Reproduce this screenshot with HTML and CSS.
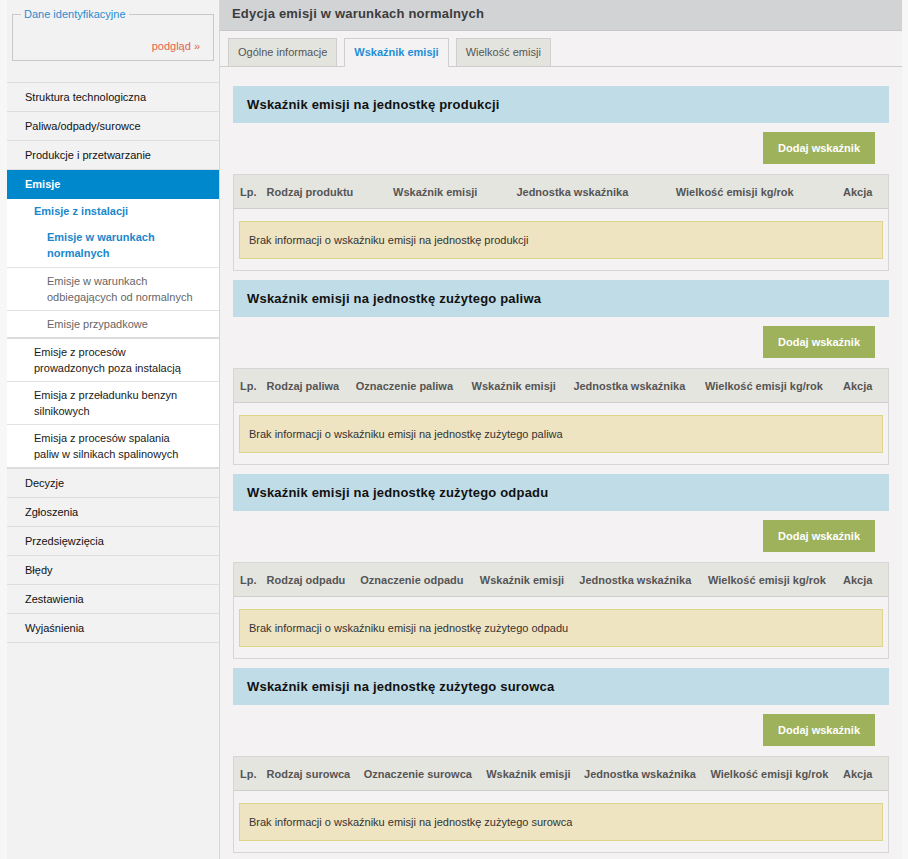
FILE: index.html
```html
<!DOCTYPE html>
<html lang="pl">
<head>
<meta charset="utf-8">
<title>Edycja emisji w warunkach normalnych</title>
<link rel="stylesheet" href="styles.css">
</head>
<body>
<div class="page">
  <aside class="sidebar">
    <div class="ident">
      <fieldset class="ident-box">
        <legend>Dane identyfikacyjne</legend>
        <div class="preview"><a href="#">podgląd »</a></div>
      </fieldset>
    </div>
    <ul class="menu">
      <li class="menu-item">Struktura technologiczna</li>
      <li class="menu-item">Paliwa/odpady/surowce</li>
      <li class="menu-item">Produkcje i przetwarzanie</li>
      <li class="menu-item active">Emisje</li>
      <li class="submenu">
        <div class="sub-head">Emisje z instalacji</div>
        <div class="subsub current">Emisje w warunkach<br>normalnych</div>
        <div class="subsub">Emisje w warunkach<br>odbiegających od normalnych</div>
        <div class="subsub last">Emisje przypadkowe</div>
        <div class="sub-item">Emisje z procesów<br>prowadzonych poza instalacją</div>
        <div class="sub-item">Emisja z przeładunku benzyn<br>silnikowych</div>
        <div class="sub-item last">Emisja z procesów spalania<br>paliw w silnikach spalinowych</div>
      </li>
      <li class="menu-item">Decyzje</li>
      <li class="menu-item">Zgłoszenia</li>
      <li class="menu-item">Przedsięwzięcia</li>
      <li class="menu-item">Błędy</li>
      <li class="menu-item">Zestawienia</li>
      <li class="menu-item">Wyjaśnienia</li>
    </ul>
  </aside>

  <main class="main">
    <div class="title-bar">Edycja emisji w warunkach normalnych</div>
    <div class="tabs">
      <div class="tab">Ogólne informacje</div>
      <div class="tab active">Wskaźnik emisji</div>
      <div class="tab">Wielkość emisji</div>
    </div>

    <div class="content">
      <section class="block">
        <h2 class="block-title">Wskaźnik emisji na jednostkę produkcji</h2>
        <div class="btn-row"><button class="btn">Dodaj wskaźnik</button></div>
        <table class="grid">
          <thead>
            <tr>
              <th class="lp">Lp.</th><th>Rodzaj produktu</th><th>Wskaźnik emisji</th><th>Jednostka wskaźnika</th><th>Wielkość emisji kg/rok</th><th class="akcja">Akcja</th>
            </tr>
          </thead>
          <tbody>
            <tr><td colspan="6"><div class="notice">Brak informacji o wskaźniku emisji na jednostkę produkcji</div></td></tr>
          </tbody>
        </table>
      </section>

      <section class="block">
        <h2 class="block-title">Wskaźnik emisji na jednostkę zużytego paliwa</h2>
        <div class="btn-row"><button class="btn">Dodaj wskaźnik</button></div>
        <table class="grid">
          <thead>
            <tr>
              <th class="lp">Lp.</th><th>Rodzaj paliwa</th><th>Oznaczenie paliwa</th><th>Wskaźnik emisji</th><th>Jednostka wskaźnika</th><th>Wielkość emisji kg/rok</th><th class="akcja">Akcja</th>
            </tr>
          </thead>
          <tbody>
            <tr><td colspan="7"><div class="notice">Brak informacji o wskaźniku emisji na jednostkę zużytego paliwa</div></td></tr>
          </tbody>
        </table>
      </section>

      <section class="block">
        <h2 class="block-title">Wskaźnik emisji na jednostkę zużytego odpadu</h2>
        <div class="btn-row"><button class="btn">Dodaj wskaźnik</button></div>
        <table class="grid">
          <thead>
            <tr>
              <th class="lp">Lp.</th><th>Rodzaj odpadu</th><th>Oznaczenie odpadu</th><th>Wskaźnik emisji</th><th>Jednostka wskaźnika</th><th>Wielkość emisji kg/rok</th><th class="akcja">Akcja</th>
            </tr>
          </thead>
          <tbody>
            <tr><td colspan="7"><div class="notice">Brak informacji o wskaźniku emisji na jednostkę zużytego odpadu</div></td></tr>
          </tbody>
        </table>
      </section>

      <section class="block">
        <h2 class="block-title">Wskaźnik emisji na jednostkę zużytego surowca</h2>
        <div class="btn-row"><button class="btn">Dodaj wskaźnik</button></div>
        <table class="grid">
          <thead>
            <tr>
              <th class="lp">Lp.</th><th>Rodzaj surowca</th><th>Oznaczenie surowca</th><th>Wskaźnik emisji</th><th>Jednostka wskaźnika</th><th>Wielkość emisji kg/rok</th><th class="akcja">Akcja</th>
            </tr>
          </thead>
          <tbody>
            <tr><td colspan="7"><div class="notice">Brak informacji o wskaźniku emisji na jednostkę zużytego surowca</div></td></tr>
          </tbody>
        </table>
      </section>
    </div>
  </main>
</div>
</body>
</html>
```

FILE: styles.css
```css
* { box-sizing: border-box; }

html, body {
  margin: 0;
  padding: 0;
}

body {
  background: #f7f7f7;
  font-family: "Liberation Sans", Arial, sans-serif;
  font-size: 11px;
  color: #111;
}

.page {
  display: flex;
  width: 895px;
  margin-left: 7px;
  min-height: 100vh;
}

/* ---------- sidebar ---------- */
.sidebar {
  width: 213px;
  flex: none;
  background: #f2f2f2;
  border-right: 1px solid #d6d6d6;
}

.ident {
  padding: 8px 5px 21px 5px;
}

.ident-box {
  margin: 0;
  padding: 0 13px 7px 8px;
  border: 1px solid #c9c9c9;
}

.ident-box legend {
  padding: 0 3px;
  color: #2a8ccf;
  font-size: 11px;
  line-height: 13px;
}

.preview {
  margin-top: 19px;
  text-align: right;
  line-height: 13px;
}

.preview a {
  color: #e0654f;
  text-decoration: none;
}

.menu {
  list-style: none;
  margin: 0;
  padding: 0;
  border-top: 1px solid #dedede;
}

.menu-item {
  height: 29px;
  line-height: 28px;
  padding-left: 18px;
  border-bottom: 1px solid #dedede;
  color: #111;
}

.menu-item.active {
  background: #0088cc;
  border-bottom-color: #0088cc;
  color: #fff;
  font-weight: bold;
}

.submenu {
  background: #fff;
}

.sub-head {
  height: 25px;
  line-height: 25px;
  padding-left: 27px;
  color: #1a87cc;
  font-weight: bold;
}

.subsub {
  padding: 5px 0 5px 40px;
  line-height: 16px;
  border-bottom: 1px solid #e2e2e2;
  color: #666;
}

.subsub.current {
  padding-bottom: 6px;
  color: #1a87cc;
  font-weight: bold;
}

.subsub.last {
  border-bottom: 2px solid #dcdcdc;
}

.sub-item {
  padding: 5px 0 5px 27px;
  line-height: 16px;
  border-bottom: 1px solid #e2e2e2;
  color: #1a1a1a;
}

.sub-item.last {
  border-bottom: 2px solid #dcdcdc;
}

/* ---------- main ---------- */
.main {
  flex: 1;
  background: #f4f2f3;
}

.title-bar {
  height: 31px;
  padding: 6px 0 0 12px;
  background: #d2d3d5;
  border-bottom: 1px solid #c6c6c9;
  font-size: 13px;
  font-weight: bold;
  color: #3c3c3c;
  line-height: 15px;
  letter-spacing: 0.2px;
}

.tabs {
  display: flex;
  gap: 7px;
  padding: 7px 0 0 8px;
  border-bottom: 1px solid #cdcdcd;
  height: 36px;
}

.tab {
  height: 28px;
  line-height: 27px;
  padding: 0 9px;
  background: #e4e4df;
  border: 1px solid #cfcfcf;
  border-bottom: none;
  color: #555;
}

.tab.active {
  height: 29px;
  background: #f4f2f3;
  color: #1e8fd5;
  font-weight: bold;
}

.content {
  padding: 19px 13px 7px 13px;
}

.block {
  margin-bottom: 9px;
}

.block-title {
  margin: 0;
  height: 37px;
  line-height: 37px;
  padding-left: 14px;
  background: #c0dce6;
  font-size: 13px;
  font-weight: bold;
  color: #111;
  letter-spacing: 0.2px;
}

.btn-row {
  display: flex;
  justify-content: flex-end;
  padding: 9px 14px 10px 0;
}

.btn {
  height: 32px;
  padding: 0 15px;
  border: none;
  background: #9eb25b;
  color: #fff;
  font-family: "Liberation Sans", Arial, sans-serif;
  font-size: 11px;
  font-weight: bold;
}

.grid {
  width: 100%;
  border-collapse: separate;
  border-spacing: 0;
  border: 1px solid #d6d6d6;
}

.grid th {
  height: 34px;
  padding: 0 5px;
  background: #e5e5e0;
  border-bottom: 1px solid #cfcfcf;
  text-align: left;
  font-size: 11px;
  font-weight: bold;
  color: #555;
  white-space: nowrap;
}

.grid th.lp {
  width: 27px;
  padding-left: 6px;
}

.grid th.akcja {
  width: 50px;
}

.grid td {
  padding: 12px 5px 11px 5px;
}

.notice {
  height: 38px;
  line-height: 36px;
  padding-left: 9px;
  background: #efe4c1;
  border: 1px solid #ddd68a;
  color: #333;
}
```
